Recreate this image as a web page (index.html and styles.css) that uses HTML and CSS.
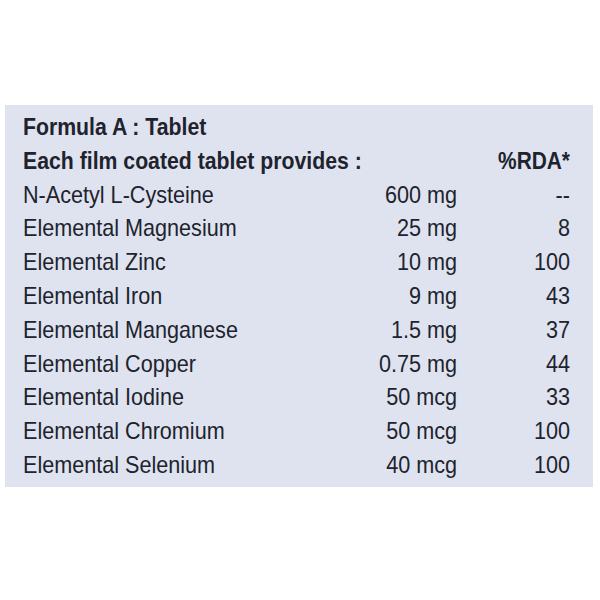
FILE: index.html
```html
<!DOCTYPE html>
<html>
<head>
<meta charset="utf-8">
<link rel="stylesheet" href="styles.css">
</head>
<body>
<div class="panel">
  <div class="title"><span class="name">Formula A : Tablet</span></div>
  <div class="row head"><span class="name">Each film coated tablet provides :</span><span class="amt"></span><span class="rda">%RDA*</span></div>
  <div class="row"><span class="name">N-Acetyl L-Cysteine</span><span class="amt">600 mg</span><span class="rda">--</span></div>
  <div class="row"><span class="name">Elemental Magnesium</span><span class="amt">25 mg</span><span class="rda">8</span></div>
  <div class="row"><span class="name">Elemental Zinc</span><span class="amt">10 mg</span><span class="rda">100</span></div>
  <div class="row"><span class="name">Elemental Iron</span><span class="amt">9 mg</span><span class="rda">43</span></div>
  <div class="row"><span class="name">Elemental Manganese</span><span class="amt">1.5 mg</span><span class="rda">37</span></div>
  <div class="row"><span class="name">Elemental Copper</span><span class="amt">0.75 mg</span><span class="rda">44</span></div>
  <div class="row"><span class="name">Elemental Iodine</span><span class="amt">50 mcg</span><span class="rda">33</span></div>
  <div class="row"><span class="name">Elemental Chromium</span><span class="amt">50 mcg</span><span class="rda">100</span></div>
  <div class="row"><span class="name">Elemental Selenium</span><span class="amt">40 mcg</span><span class="rda">100</span></div>
</div>
</body>
</html>
```
FILE: styles.css
```css
html, body {
  margin: 0;
  padding: 0;
  background: #ffffff;
}
body {
  padding-top: 105px;
  padding-left: 5px;
  font-family: "Liberation Sans", Arial, sans-serif;
  color: #20232e;
}
.panel {
  width: 588px;
  height: 382px;
  box-sizing: border-box;
  background: #dfe3ef;
  padding: 5px 23px 0 18px;
  font-size: 24px;
  line-height: 33.8px;
}
.title {
  font-weight: 700;
  white-space: nowrap;
}
.row {
  display: grid;
  grid-template-columns: minmax(0, 1fr) 120px 113px;
  white-space: nowrap;
}
.head {
  font-weight: 700;
}
.name {
  display: inline-block;
  transform: scaleX(0.9);
  transform-origin: left center;
}
.title .name,
.head .name {
  transform: scaleX(0.885);
}
.amt, .rda {
  display: block;
  text-align: right;
  transform: scaleX(0.9);
  transform-origin: right center;
}
.head .rda {
  transform: scaleX(0.87);
}
```
